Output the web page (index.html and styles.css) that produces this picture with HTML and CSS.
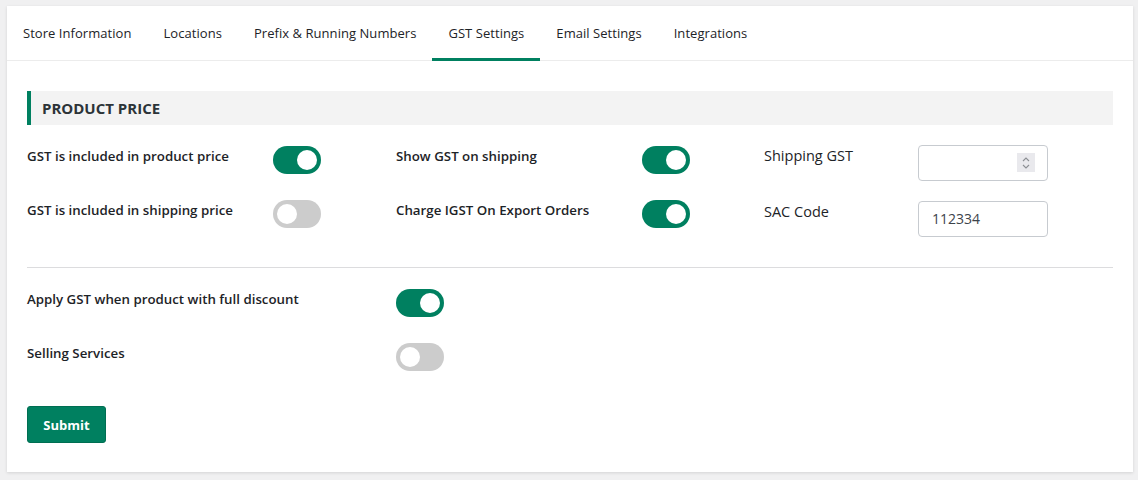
FILE: index.html
```html
<!DOCTYPE html>
<html lang="en">
<head>
  <meta charset="UTF-8" />
  <meta name="viewport" content="width=device-width, initial-scale=1.0" />
  <title>GST Settings</title>
  <link rel="stylesheet" href="styles.css">
</head>
<body>
  <div class="card">
    <nav class="tabs">
      <a class="tab">Store Information</a>
      <a class="tab">Locations</a>
      <a class="tab">Prefix &amp; Running Numbers</a>
      <a class="tab active">GST Settings</a>
      <a class="tab">Email Settings</a>
      <a class="tab">Integrations</a>
    </nav>

    <form class="content">
      <h2 class="section-title">PRODUCT PRICE</h2>

      <div class="grid">
        <div class="col">
          <div class="row">
            <span class="label">GST is included in product price</span>
            <span class="toggle on"></span>
          </div>
          <div class="row">
            <span class="label">GST is included in shipping price</span>
            <span class="toggle"></span>
          </div>
        </div>
        <div class="col">
          <div class="row">
            <span class="label">Show GST on shipping</span>
            <span class="toggle on"></span>
          </div>
          <div class="row">
            <span class="label">Charge IGST On Export Orders</span>
            <span class="toggle on"></span>
          </div>
        </div>
        <div class="col col-inputs">
          <div class="row">
            <span class="field-label">Shipping GST</span>
            <div class="input number">
              <span class="spinner">
                <svg width="10" height="14" viewBox="0 0 10 14"><path d="M2 5 L5 2 L8 5 M2 9 L5 12 L8 9" fill="none" stroke="#8c8f94" stroke-width="1.1"/></svg>
              </span>
            </div>
          </div>
          <div class="row">
            <span class="field-label">SAC Code</span>
            <div class="input">112334</div>
          </div>
        </div>
      </div>

      <hr class="divider">

      <div class="list">
        <div class="row">
          <span class="label wide">Apply GST when product with full discount</span>
          <span class="toggle on"></span>
        </div>
        <div class="row">
          <span class="label wide">Selling Services</span>
          <span class="toggle"></span>
        </div>
      </div>

      <button type="button" class="btn">Submit</button>
    </form>
  </div>
</body>
</html>
```

FILE: styles.css
```css
body {
  margin: 0;
  padding: 6px 5px 8px 7px;
  background: #f0f0f1;
  font-family: "Open Sans", "Noto Sans", sans-serif;
  color: #1d2327;
}
.card {
  background: #fff;
  box-shadow: 0 1px 3px rgba(0,0,0,0.12);
}
.tabs {
  display: flex;
  border-bottom: 1px solid #ececec;
  height: 54px;
}
.tab {
  padding: 0 16px;
  font-size: 13px;
  letter-spacing: 0.05px;
  line-height: 54px;
  color: #1d2327;
  cursor: pointer;
}
.tab.active {
  border-bottom: 3px solid #008060;
  height: 52px;
  margin-bottom: -1px;
}
.content {
  padding: 30px 20px 29px;
}
.section-title {
  margin: 0;
  height: 34px;
  line-height: 35px;
  background: #f3f3f3;
  border-left: 4px solid #008060;
  padding-left: 11px;
  font-size: 15px;
  font-weight: 700;
  color: #2c3338;
}
.grid {
  display: grid;
  grid-template-columns: 369px 368px 1fr;
  margin-top: 20px;
}
.col {
  display: flex;
  flex-direction: column;
  gap: 26px;
  padding-top: 1px;
}
.col-inputs {
  gap: 20px;
  padding-top: 0;
}
.row {
  display: flex;
  align-items: flex-start;
}
.label {
  width: 246px;
  font-size: 13.3px;
  font-weight: 600;
  line-height: 20px;
}
.label.wide {
  width: 369px;
}
.field-label {
  width: 154px;
  font-size: 14.5px;
  line-height: 20px;
  margin-top: 1px;
}
.toggle {
  position: relative;
  width: 48px;
  height: 28px;
  border-radius: 14px;
  background: #cccccc;
}
.toggle::after {
  content: "";
  position: absolute;
  top: 4px;
  left: 4px;
  width: 20px;
  height: 20px;
  border-radius: 50%;
  background: #fff;
}
.toggle.on {
  background: #008060;
}
.toggle.on::after {
  left: 24px;
}
.input {
  position: relative;
  box-sizing: border-box;
  width: 130px;
  height: 36px;
  border: 1px solid #c7cbd0;
  border-radius: 4px;
  padding: 0 13px;
  line-height: 34px;
  font-size: 14px;
  color: #3c434a;
}
.spinner {
  position: absolute;
  right: 12px;
  top: 7px;
  width: 18px;
  height: 19px;
  background: #e9e9ed;
  display: flex;
  align-items: center;
  justify-content: center;
}
.divider {
  border: 0;
  border-top: 1px solid #dcdcde;
  margin: 30px 0 21px;
}
.list {
  display: flex;
  flex-direction: column;
  gap: 26px;
}
.btn {
  margin-top: 35px;
  width: 79px;
  height: 37px;
  background: #008060;
  color: #fff;
  border: 1px solid #006e52;
  border-radius: 3px;
  font-family: inherit;
  font-size: 13px;
  font-weight: 700;
  cursor: pointer;
}
```
